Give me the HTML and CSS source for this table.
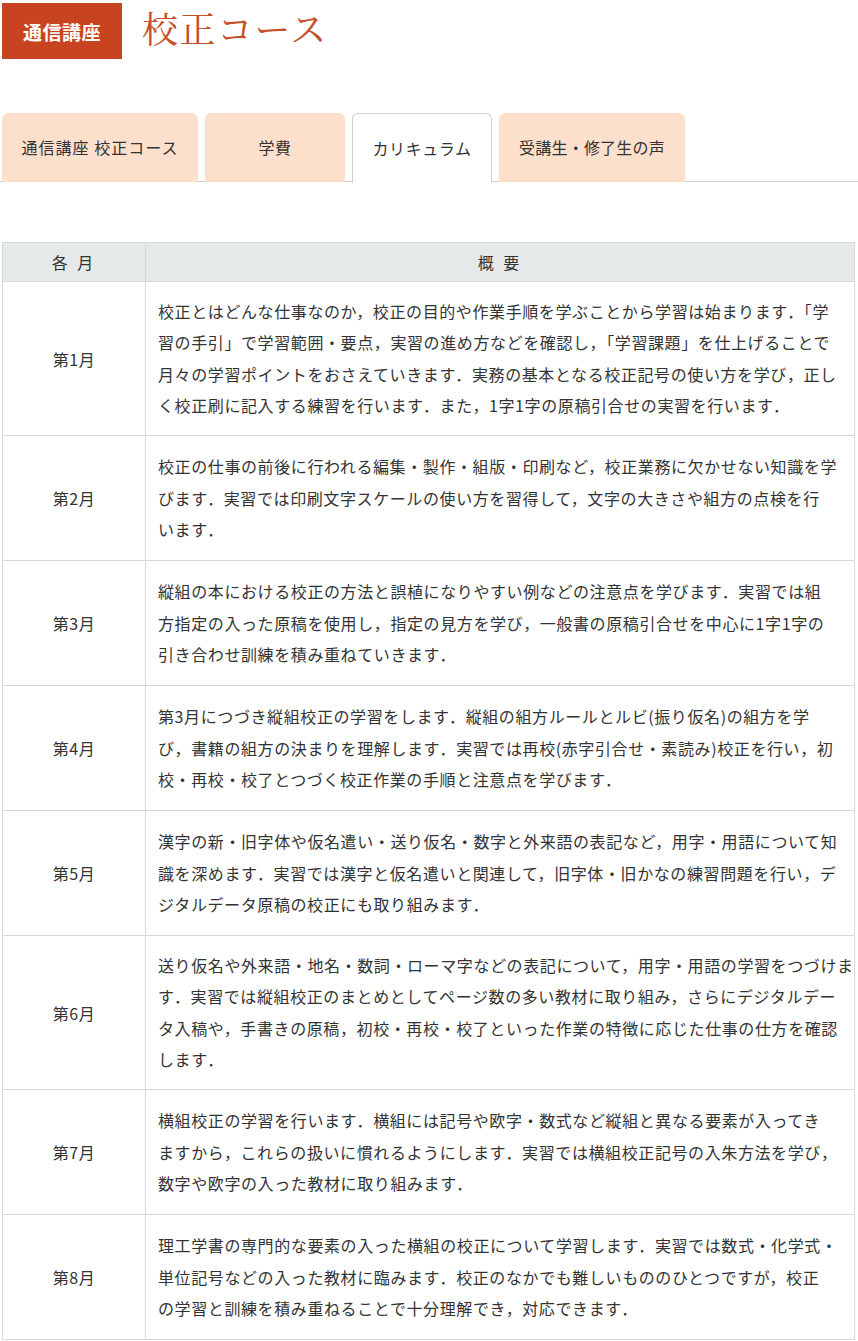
FILE: index.html
```html
<!DOCTYPE html>
<html lang="ja">
<head>
<meta charset="utf-8">
<title>通信講座 校正コース カリキュラム</title>
<link rel="stylesheet" href="styles.css">
</head>
<body>
<div class="page">
  <header class="head">
    <div class="badge">通信講座</div>
    <h1 class="title">校正コース</h1>
  </header>

  <nav class="tabs">
    <a class="tab tab-course">通信講座 校正コース</a>
    <a class="tab">学費</a>
    <a class="tab is-active">カリキュラム</a>
    <a class="tab tab-voice">受講生・修了生の声</a>
  </nav>

  <table class="curriculum">
    <colgroup>
      <col class="col-month">
      <col>
    </colgroup>
    <thead>
      <tr><th>各&nbsp;月</th><th>概&nbsp;要</th></tr>
    </thead>
    <tbody>
      <tr>
        <td class="month">第1月</td>
        <td class="desc">校正とはどんな仕事なのか，校正の目的や作業手順を学ぶことから学習は始まります．「学<br>習の手引」で学習範囲・要点，実習の進め方などを確認し，「学習課題」を仕上げることで<br>月々の学習ポイントをおさえていきます．実務の基本となる校正記号の使い方を学び，正し<br>く校正刷に記入する練習を行います．また，1字1字の原稿引合せの実習を行います．</td>
      </tr>
      <tr>
        <td class="month">第2月</td>
        <td class="desc">校正の仕事の前後に行われる編集・製作・組版・印刷など，校正業務に欠かせない知識を学<br>びます．実習では印刷文字スケールの使い方を習得して，文字の大きさや組方の点検を行<br>います．</td>
      </tr>
      <tr>
        <td class="month">第3月</td>
        <td class="desc">縦組の本における校正の方法と誤植になりやすい例などの注意点を学びます．実習では組<br>方指定の入った原稿を使用し，指定の見方を学び，一般書の原稿引合せを中心に1字1字の<br>引き合わせ訓練を積み重ねていきます．</td>
      </tr>
      <tr>
        <td class="month">第4月</td>
        <td class="desc">第3月につづき縦組校正の学習をします．縦組の組方ルールとルビ(振り仮名)の組方を学<br>び，書籍の組方の決まりを理解します．実習では再校(赤字引合せ・素読み)校正を行い，初<br>校・再校・校了とつづく校正作業の手順と注意点を学びます．</td>
      </tr>
      <tr>
        <td class="month">第5月</td>
        <td class="desc">漢字の新・旧字体や仮名遣い・送り仮名・数字と外来語の表記など，用字・用語について知<br>識を深めます．実習では漢字と仮名遣いと関連して，旧字体・旧かなの練習問題を行い，デ<br>ジタルデータ原稿の校正にも取り組みます．</td>
      </tr>
      <tr>
        <td class="month">第6月</td>
        <td class="desc">送り仮名や外来語・地名・数詞・ローマ字などの表記について，用字・用語の学習をつづけま<br>す．実習では縦組校正のまとめとしてページ数の多い教材に取り組み，さらにデジタルデー<br>タ入稿や，手書きの原稿，初校・再校・校了といった作業の特徴に応じた仕事の仕方を確認<br>します．</td>
      </tr>
      <tr>
        <td class="month">第7月</td>
        <td class="desc">横組校正の学習を行います．横組には記号や欧字・数式など縦組と異なる要素が入ってき<br>ますから，これらの扱いに慣れるようにします．実習では横組校正記号の入朱方法を学び，<br>数字や欧字の入った教材に取り組みます．</td>
      </tr>
      <tr>
        <td class="month">第8月</td>
        <td class="desc">理工学書の専門的な要素の入った横組の校正について学習します．実習では数式・化学式・<br>単位記号などの入った教材に臨みます．校正のなかでも難しいもののひとつですが，校正<br>の学習と訓練を積み重ねることで十分理解でき，対応できます．</td>
      </tr>
    </tbody>
  </table>
</div>
</body>
</html>
```

FILE: styles.css
```css
* { box-sizing: border-box; }

html, body {
  margin: 0;
  padding: 0;
  background: #ffffff;
}

body {
  font-family: "Noto Sans CJK JP", "Noto Sans", sans-serif;
  color: #333333;
  font-size: 16px;
}

.page {
  padding: 3px 2px 0 2px;
}

.head {
  display: flex;
  align-items: center;
  gap: 20px;
  height: 56px;
}

.badge {
  width: 120px;
  height: 56px;
  background: #c8431f;
  color: #ffffff;
  font-weight: bold;
  font-size: 19px;
  letter-spacing: 0.5px;
  display: flex;
  align-items: center;
  justify-content: center;
}

.title {
  margin: 0;
  font-family: "Noto Serif CJK JP", "Liberation Serif", serif;
  font-weight: normal;
  font-size: 36px;
  letter-spacing: 1.5px;
  color: #c5502b;
  line-height: 1;
  padding-bottom: 6px;
}

.tabs {
  display: flex;
  gap: 7px;
  margin: 54px -2px 0 -2px;
  padding-left: 2px;
  border-bottom: 1px solid #cfcfcf;
  height: 69px;
}

.tab {
  flex: none;
  width: 140px;
  height: 69px;
  padding: 0 0 1px;
  background: #fde0cc;
  border-radius: 6px 6px 0 0;
  display: flex;
  align-items: center;
  justify-content: center;
  font-size: 16px;
  letter-spacing: 0.6px;
  color: #333333;
  text-decoration: none;
  white-space: nowrap;
}

.tab-course {
  width: 196px;
  letter-spacing: 1px;
}

.tab-voice {
  width: 186px;
  letter-spacing: 0.2px;
}

.tab.is-active {
  background: #ffffff;
  border: 1px solid #cfcfcf;
  border-bottom: none;
  height: 70px;
}

.curriculum {
  margin-top: 60px;
  width: 853px;
  table-layout: fixed;
  border-collapse: collapse;
  font-size: 16px;
  letter-spacing: 0.6px;
  color: #333333;
}

.col-month {
  width: 143px;
}

.curriculum th,
.curriculum td {
  border: 1px solid #d6d9da;
}

.curriculum th {
  background: #e6e9ea;
  font-weight: normal;
  height: 39px;
  padding: 0;
  letter-spacing: 3px;
}

.curriculum tbody tr {
  height: 125px;
}

.month {
  text-align: center;
  vertical-align: middle;
}

.desc {
  padding: 14px 4px 14px 12px;
  line-height: 31.3px;
  white-space: nowrap;
  vertical-align: middle;
  overflow: hidden;
}
```
